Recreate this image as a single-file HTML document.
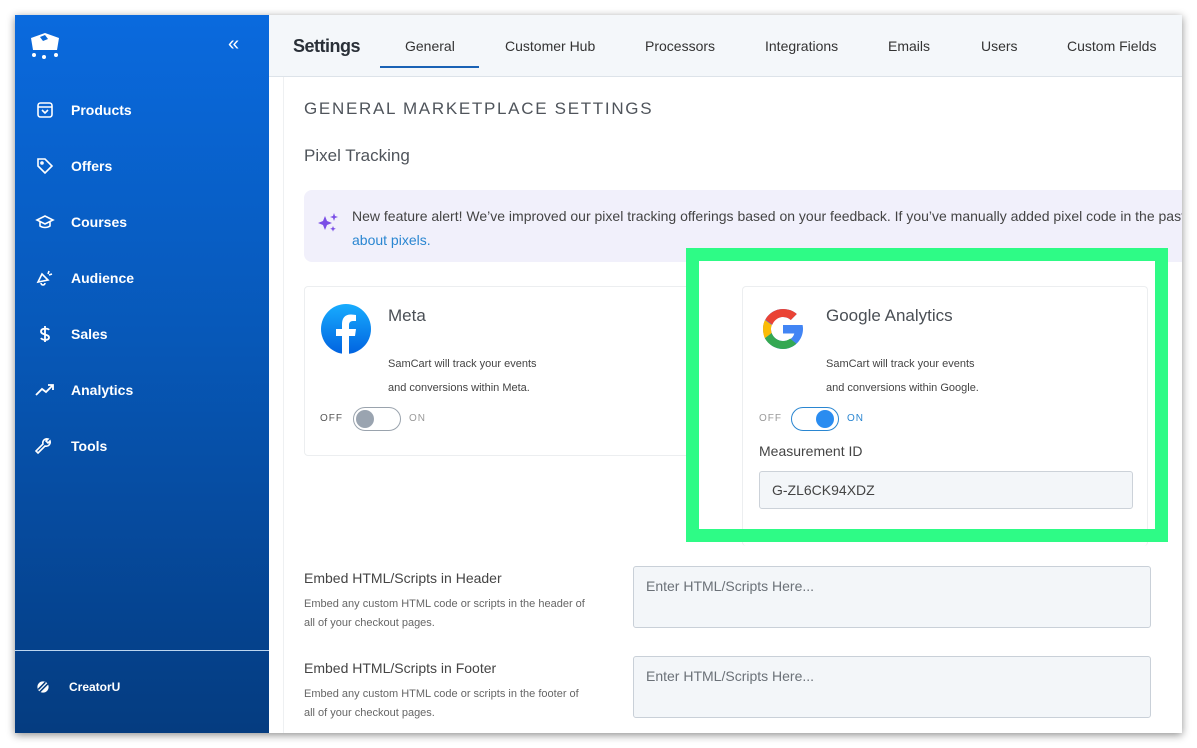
<!DOCTYPE html>
<html><head><style>
*{box-sizing:border-box;margin:0;padding:0}
body{width:1197px;height:748px;background:#fff;position:relative;overflow:hidden;font-family:"Liberation Sans",sans-serif;color:#4a4f57}
.win{position:absolute;left:15px;top:15px;width:1167px;height:718px;background:#fff;box-shadow:0 2px 8px rgba(0,0,0,.45);overflow:hidden}
.side{position:absolute;left:0;top:0;width:254px;height:718px;background:linear-gradient(#0a6ade,#0758b8 45%,#05438f 85%,#053c80)}
.nav{position:absolute;left:20px;color:#fff;font-weight:bold;font-size:14px;display:flex;align-items:center}
.nav svg{width:20px;height:20px;margin-right:16px}
.hdr{position:absolute;left:254px;top:0;right:0;height:62px;background:#f4f7fa;border-bottom:1px solid #dde3e9}
.tab{position:absolute;top:23px;font-size:14px;color:#333}
.abs{position:absolute}
.card{position:absolute;border:1px solid #eceef0;border-radius:4px;background:#fff}
.sm{font-size:11px;color:#444}
.tog{position:absolute;width:48px;height:24px;border-radius:12px;border:1.5px solid #9aa3ad}
.ta{position:absolute;left:618px;width:518px;height:62px;background:#f3f6f9;border:1px solid #c9d0d8;border-radius:3px;font-size:14px;color:#6b7178;padding:11px 12px}
</style></head><body>
<div class="win">
<div class="side">
 <svg class="abs" style="left:13px;top:15px" width="34" height="30" viewBox="0 0 34 30"><path d="M3 8 L17 3 L31 8 L29 20 L5 20 Z" fill="#fff"/><path d="M12 7 L17 5 L20 9 L15 11Z" fill="#0a69d8"/><circle cx="6" cy="25" r="2" fill="#fff"/><circle cx="16" cy="27" r="2" fill="#fff"/><circle cx="28" cy="25" r="2" fill="#fff"/></svg>
 <div class="abs" style="left:213px;top:18px;color:#fff;font-size:20px">«</div>
 <div class="nav" style="top:85px"><svg viewBox="0 0 20 20" fill="none" stroke="#fff" stroke-width="1.6"><rect x="3" y="3" width="14" height="14" rx="2.5"/><path d="M3 7h14M7 10l3 3 3-3"/></svg>Products</div>
 <div class="nav" style="top:141px"><svg viewBox="0 0 20 20" fill="none" stroke="#fff" stroke-width="1.6"><path d="M3 3h7l7 7-7 7-7-7z"/><circle cx="7" cy="7" r="1"/></svg>Offers</div>
 <div class="nav" style="top:197px"><svg viewBox="0 0 20 20" fill="none" stroke="#fff" stroke-width="1.6"><path d="M2 8l8-4 8 4-8 4z M5 10v4c3 2 7 2 10 0v-4"/></svg>Courses</div>
 <div class="nav" style="top:253px"><svg viewBox="0 0 20 20" fill="none" stroke="#fff" stroke-width="1.6"><path d="M3 14l4-8 6 6zM6 15a2 2 0 0 0 4 0M14 3l-1 3M17 6l-3 1"/></svg>Audience</div>
 <div class="nav" style="top:309px"><svg viewBox="0 0 20 20" fill="none" stroke="#fff" stroke-width="1.8"><path d="M14 6c-1-2-8-2-8 1.5S14 10 14 13.5 7 16 6 14M10 2v16"/></svg>Sales</div>
 <div class="nav" style="top:365px"><svg viewBox="0 0 20 20" fill="none" stroke="#fff" stroke-width="1.8"><path d="M1 15l6-6 4 3 7-7M13 5h5v5"/></svg>Analytics</div>
 <div class="nav" style="top:421px"><svg viewBox="0 0 20 20" fill="none" stroke="#fff" stroke-width="1.6"><path d="M3 17l7-7a4 4 0 0 0 5-5l-2 2-2-2 2-2a4 4 0 0 0-5 5l-7 7z"/></svg>Tools</div>
 <div class="abs" style="left:0;top:635px;width:254px;height:1px;background:#bcd6f0"></div>
 <div class="nav" style="top:664px;font-size:12px"><svg viewBox="0 0 20 20" style="width:16px;height:16px;margin-right:18px"><circle cx="10" cy="10" r="7" fill="#fff"/><path d="M4 13L13 4M6 16L16 6" stroke="#053d80" stroke-width="2"/></svg>CreatorU</div>
</div>
<div class="hdr">
 <div class="abs" style="left:24px;top:21px;font-size:18px;font-weight:bold;color:#2a3038;letter-spacing:-.5px">Settings</div>
 <div class="tab" style="left:136px">General</div>
 <div class="abs" style="left:111px;top:51px;width:99px;height:2px;background:#1a62b5"></div>
 <div class="tab" style="left:236px">Customer Hub</div>
 <div class="tab" style="left:376px">Processors</div>
 <div class="tab" style="left:496px">Integrations</div>
 <div class="tab" style="left:619px">Emails</div>
 <div class="tab" style="left:712px">Users</div>
 <div class="tab" style="left:798px">Custom Fields</div>
</div>
<div class="abs" style="left:268px;top:62px;width:1px;height:656px;background:#eef0f2"></div>
<div class="abs" style="left:289px;top:84px;font-size:17px;letter-spacing:1.7px;color:#4f545b">GENERAL MARKETPLACE SETTINGS</div>
<div class="abs" style="left:289px;top:131px;font-size:17px;color:#4f545b">Pixel Tracking</div>
<div class="abs" style="left:289px;top:175px;width:900px;height:72px;background:#f1f0fb;border-radius:8px"></div>
<svg class="abs" style="left:302px;top:197px" width="22" height="22" viewBox="0 0 22 22" fill="#7b4fe6"><path d="M8 4l2 5 5 2-5 2-2 5-2-5-5-2 5-2z"/><path d="M17 1l1 3 3 1-3 1-1 3-1-3-3-1 3-1z"/><path d="M16 14l.8 2 2 .8-2 .8-.8 2-.8-2-2-.8 2-.8z"/></svg>
<div class="abs" style="left:337px;top:189px;font-size:14px;line-height:24px;color:#444;white-space:nowrap">New feature alert! We’ve improved our pixel tracking offerings based on your feedback. If you’ve manually added pixel code in the past<br><span style="color:#2a86d1">about pixels.</span></div>
<div class="card" style="left:289px;top:271px;width:407px;height:170px"></div>
<svg class="abs" style="left:305px;top:288px" width="52" height="52" viewBox="0 0 52 52"><defs><linearGradient id="fb" x1="0" y1="0" x2="0" y2="1"><stop offset="0" stop-color="#18acfe"/><stop offset="1" stop-color="#0163e0"/></linearGradient></defs><circle cx="26" cy="26" r="25" fill="url(#fb)"/><path d="M29 52V33h6l1-7h-7v-4c0-2 1-4 4-4h3v-6c-1 0-3-.5-5-.5-6 0-9 3.5-9 9.5v5h-6v7h6v19z" fill="#fff"/></svg>
<div class="abs" style="left:373px;top:291px;font-size:17px;color:#4a4f55">Meta</div>
<div class="abs sm" style="left:373px;top:337px;line-height:24px">SamCart will track your events<br>and conversions within Meta.</div>
<div class="abs" style="left:305px;top:398px;font-size:10px;letter-spacing:1px;color:#555">OFF</div>
<div class="tog" style="left:338px;top:392px;width:48px"><div class="abs" style="left:2px;top:2px;width:18px;height:18px;border-radius:50%;background:#9aa4b0"></div></div>
<div class="abs" style="left:394px;top:398px;font-size:10px;letter-spacing:1px;color:#999">ON</div>
<div class="abs" style="left:684px;top:246px;width:456px;height:268px;background:#fff"></div>
<div class="card" style="left:727px;top:271px;width:406px;height:260px;border-bottom:none"></div>
<svg class="abs" style="left:744px;top:290px" width="48" height="48" viewBox="0 0 48 48"><path d="M43.6 20H24v8.5h11.3C34 33.4 29.6 36 24 36c-6.6 0-12-5.4-12-12s5.4-12 12-12c3 0 5.7 1.1 7.8 3l6-6C34.3 5.8 29.4 4 24 4 13 4 4 13 4 24s9 20 20 20 20-9 20-20c0-1.3-.1-2.7-.4-4z" fill="#4285f4"/><path d="M6.3 14.7l7 5.1C15.1 15.3 19.2 12 24 12c3 0 5.7 1.1 7.8 3l6-6C34.3 5.8 29.4 4 24 4 16.3 4 9.7 8.3 6.3 14.7z" fill="#ea4335"/><path d="M24 44c5.2 0 9.9-2 13.4-5.2l-6.2-5.2C29.2 35.1 26.7 36 24 36c-5.2 0-9.6-3.3-11.3-8l-6.9 5.3C9.4 39.6 16.2 44 24 44z" fill="#34a853"/><path d="M6 15l6.9 5.1c-.6 1.2-.9 2.5-.9 3.9s.3 2.8.7 4l-6.9 5.3C4.7 30.7 4 27.4 4 24s.7-6.5 2-9z" fill="#fbbc05"/></svg>
<div class="abs" style="left:811px;top:291px;font-size:17px;color:#4a4f55">Google Analytics</div>
<div class="abs sm" style="left:811px;top:337px;line-height:24px">SamCart will track your events<br>and conversions within Google.</div>
<div class="abs" style="left:744px;top:398px;font-size:10px;letter-spacing:1px;color:#999">OFF</div>
<div class="tog" style="left:776px;top:392px;border-color:#2a86d1"><div class="abs" style="left:24px;top:2px;width:18px;height:18px;border-radius:50%;background:#2a8cf0"></div></div>
<div class="abs" style="left:832px;top:398px;font-size:10px;letter-spacing:1px;color:#2a86d1">ON</div>
<div class="abs" style="left:744px;top:428px;font-size:14px;color:#444">Measurement ID</div>
<div class="abs" style="left:744px;top:456px;width:374px;height:38px;background:#f3f6f9;border:1px solid #ccd2d9;border-radius:3px;font-size:14px;color:#444;padding:10px 12px">G-ZL6CK94XDZ</div>
<div class="abs" style="left:671px;top:233px;width:482px;height:294px;border:13px solid #2efb86"></div>
<div class="abs" style="left:289px;top:555px;font-size:14px;color:#444">Embed HTML/Scripts in Header</div>
<div class="abs sm" style="left:289px;top:580px;line-height:19px;font-size:11px;color:#666">Embed any custom HTML code or scripts in the header of<br>all of your checkout pages.</div>
<div class="ta" style="top:551px">Enter HTML/Scripts Here...</div>
<div class="abs" style="left:289px;top:645px;font-size:14px;color:#444">Embed HTML/Scripts in Footer</div>
<div class="abs sm" style="left:289px;top:670px;line-height:19px;font-size:11px;color:#666">Embed any custom HTML code or scripts in the footer of<br>all of your checkout pages.</div>
<div class="ta" style="top:641px">Enter HTML/Scripts Here...</div>
</div>
</body></html>
